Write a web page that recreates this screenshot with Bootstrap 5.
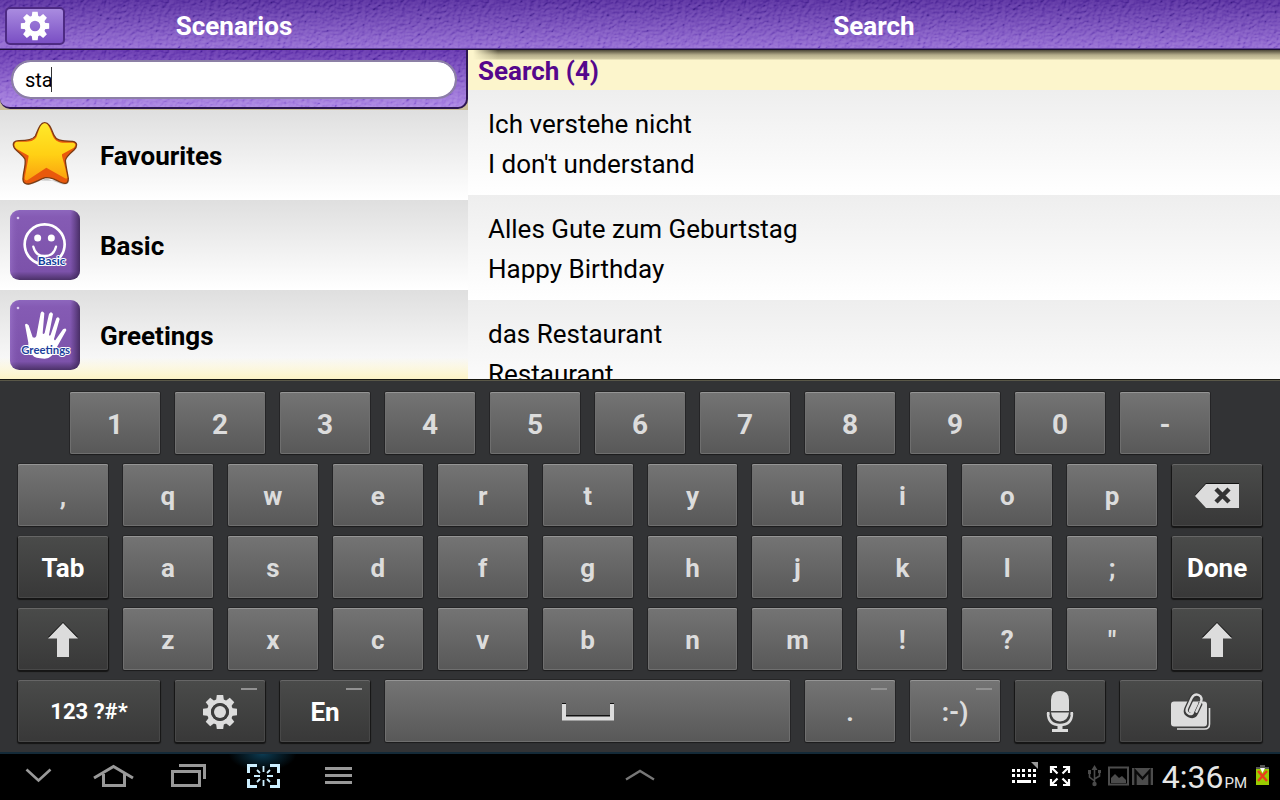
<!DOCTYPE html>
<html lang="en">
<head>
<meta charset="utf-8">
<meta name="viewport" content="width=device-width, initial-scale=1">
<title>Phrasebook search</title>
<link href="https://cdn.jsdelivr.net/npm/bootstrap@5.3.0/dist/css/bootstrap.min.css" rel="stylesheet">
<style>
  :root {
    --grain: url("data:image/svg+xml,%3Csvg xmlns='http://www.w3.org/2000/svg' width='320' height='120'%3E%3Cfilter id='g' x='0' y='0' width='100%25' height='100%25'%3E%3CfeTurbulence type='fractalNoise' baseFrequency='.25 .32' numOctaves='3' seed='4' stitchTiles='stitch'/%3E%3CfeDiffuseLighting surfaceScale='1.6' lighting-color='%23fff'%3E%3CfeDistantLight azimuth='235' elevation='45'/%3E%3C/feDiffuseLighting%3E%3CfeColorMatrix values='1 0 0 0 -.26 1 0 0 0 -.26 1 0 0 0 -.26 0 0 0 0 .5'/%3E%3C/filter%3E%3Crect width='320' height='120' filter='url(%23g)'/%3E%3C/svg%3E");
  }
  body { font-family: Roboto, "Noto Sans", sans-serif; color: #000; background: #fcf6cd; }
  button { font-family: inherit; }
  svg { display: block; flex: none; }
  .pane-left { flex: 117 1 0; min-width: 0; }
  .pane-right { flex: 203 1 0; min-width: 0; }
  .leather { background-image: var(--grain), linear-gradient(#532b9c, #9168d2); background-blend-mode: soft-light, normal; }

  .app-bar { height: 50px; flex: none; border-bottom: 1px solid #1c0e33; box-shadow: inset 0 -1px 0 #593b92; }
  .app-title { font-size: 26px; line-height: 30px; font-weight: 700; color: #fff; margin: 0; padding-top: 2px; }
  .scenario-head { display: grid; grid-template-columns: 1fr auto 1fr; align-items: center; }
  .settings-btn { width: 60px; height: 38px; padding: 0; display: flex; align-items: center; justify-content: center;
    border: 2px solid #4d2a83; border-radius: 5px; background: linear-gradient(#a98be0, #7a4fc4); margin: 3px 0 0 5px; }

  .content { min-height: 0; }
  .search-wrap { height: 60px; background: #cbbf99; }
  .search-panel { height: 59px; padding: 10px 9px 0 11px; border-right: 2px solid #2c1550; border-bottom: 2px solid #2c1550;
    border-radius: 0 0 10px 10px; background-image: var(--grain), linear-gradient(#5f31aa, #a780e2); }
  .search-input { height: 39px; border: 2px solid #8c80a5; border-radius: 20px; padding: 0 12px; font-size: 20px; line-height: 24px; color: #000; }
  .search-input:focus { box-shadow: none; border-color: #8c80a5; }
  .text-caret { position: absolute; left: 40px; top: 7px; width: 1px; height: 25px; background: #333; }
  .scenario { height: 90px; padding-left: 10px; gap: 20px; background: linear-gradient(#dfdfdf, #fff); font-size: 26px; font-weight: 700; color: #000; text-decoration: none; }
  .scenario span { padding-top: 2px; }
  .scenario.fading { background: linear-gradient(transparent 75%, #fcf3c4), linear-gradient(#dfdfdf, #fff); }

  .results-head { height: 40px; padding-left: 10px; font-size: 26px; line-height: 42px; font-weight: 700; color: #55078c; margin: 0;
    background: linear-gradient(#4c4737, #b4ad8a 5px, #d3cca4 9px, #fcf5cc 10px); position: relative; }
  .results-head::before { content: ""; position: absolute; inset: 0 auto auto 0; width: 30px; height: 10px; background: linear-gradient(90deg, #fcf5cc 5px, transparent); }
  .results-head span { position: relative; }
  .phrase { height: 105px; padding: 14px 20px; background: linear-gradient(#eeeeee, #fff); font-size: 26px; line-height: 40px; }

  .keyboard { padding: 12px 18px 10px; background: #323335; border-top: 1px solid #171712; box-shadow: inset 0 1px 0 #5a5848; display: flex; flex: none; flex-direction: column; gap: 10px; }
  .key-row { display: flex; gap: 15px; }
  .num-row { padding: 0 52px; }
  .kb-key { flex: 1 1 0; min-width: 0; height: 62px; padding: 2px 0 0; border: 0; border-radius: 2px; position: relative;
    display: flex; align-items: center; justify-content: center; font-size: 26px; line-height: 30px; font-weight: 700; color: #dcdcdc;
    background: linear-gradient(#747474, #585858);
    box-shadow: inset 0 1px 0 #959595, inset 0 0 0 1px #6f6f6f, 0 1px 1px 0 #1d1d1e, 0 0 0 1px #262627; }
  .num-row .kb-key { font-size: 28px; padding-top: 4px; }
  .kb-fn { color: #fff; background: linear-gradient(#4a4b4a, #383838); box-shadow: inset 0 1px 0 #666, inset 0 0 0 1px #484848, 0 1px 1px 1px #151515; }
  .key-sym { font-size: 22px; }
  .base-row .kb-key { flex-grow: 90; }
  .base-row .kb-wide { flex-grow: 142; }
  .base-row .kb-space { flex-grow: 405; }
  .has-more::after { content: ""; position: absolute; right: 8px; top: 8px; width: 16px; height: 2px; background: #929292; }

  .system-bar { height: 48px; flex: none; background: #000; border-top: 2px solid #142a38; display: grid; grid-template-columns: 1fr auto 1fr; }
  .sys-btn { border: 0; padding: 0; width: 75px; height: 46px; background: none; }
  .sys-btn.lit { background: radial-gradient(ellipse 34px 17px at 50% 0, #0c3b52, #000); }
  .sys-status { color: #e6e6e6; padding-right: 10px; }
  .clock { font-size: 32px; line-height: 46px; font-weight: 400; }
  .clock-half { font-size: 15px; line-height: 20px; padding-top: 11px; margin: 0 8px 0 1px; }
</style>
</head>
<body class="vh-100 overflow-hidden d-flex flex-column">

<svg width="0" height="0" class="position-absolute" aria-hidden="true">
  <defs>
    <g id="teeth">
      <path d="M-3.2 -17H3.2L4 -11H-4ZM-3.2 17H3.2L4 11H-4ZM-17 -3.2V3.2L-11 4V-4ZM17 -3.2V3.2L11 4V-4Z"/>
      <path transform="rotate(45)" d="M-3.2 -17H3.2L4 -11H-4ZM-3.2 17H3.2L4 11H-4ZM-17 -3.2V3.2L-11 4V-4ZM17 -3.2V3.2L11 4V-4Z"/>
    </g>
    <symbol id="shift" viewBox="0 0 32 36"><path fill="#151515" d="M16 0 31 15H22V20H10V15H1Z"/><path fill="#dcdcdc" d="M16 1 31 16.500H22V35H10V16.500H1Z"/></symbol>
    <linearGradient id="gold" x1="0" y1="0" x2="0" y2="1"><stop offset="0" stop-color="#ffe92a"/><stop offset=".55" stop-color="#ffd014"/><stop offset="1" stop-color="#fb9f0f"/></linearGradient>
    <linearGradient id="tileV" x1="0" y1="0" x2="0" y2="1"><stop offset="0" stop-color="#8d66bd"/><stop offset=".1" stop-color="#855bb4"/><stop offset=".88" stop-color="#7c52aa"/><stop offset="1" stop-color="#4b3168"/></linearGradient>
    <linearGradient id="tileH" x1="0" y1="0" x2="1" y2="0"><stop offset="0" stop-color="#b28ce0" stop-opacity=".35"/><stop offset=".14" stop-color="#7d54ad" stop-opacity="0"/><stop offset=".86" stop-color="#3c2458" stop-opacity="0"/><stop offset="1" stop-color="#35204c" stop-opacity=".75"/></linearGradient>
  </defs>
</svg>

<header class="app-bar leather d-flex">
  <div class="pane-left scenario-head">
    <button class="settings-btn" type="button" aria-label="Settings">
      <svg width="30" height="30" viewBox="-18 -18 36 36" fill="#fff"><use href="#teeth"/><circle r="9.500" fill="none" stroke="#fff" stroke-width="6.500"/></svg>
    </button>
    <h1 class="app-title">Scenarios</h1>
  </div>
  <div class="pane-right d-flex align-items-center justify-content-center"><h1 class="app-title">Search</h1></div>
</header>

<main class="content flex-grow-1 d-flex overflow-hidden">
  <section class="pane-left">
    <div class="search-wrap">
      <div class="search-panel leather">
        <div class="position-relative">
          <input class="form-control search-input" type="text" value="sta" aria-label="Search phrases">
          <span class="text-caret"></span>
        </div>
      </div>
    </div>
    <nav>
      <a href="#" class="scenario d-flex align-items-center">
        <svg width="70" height="70" viewBox="30 30 210 210">
          <path fill="#000" opacity=".2" d="M70 212Q78 230 98 222L138 205 184 222Q206 228 208 210Z"/>
          <path fill="#e9590c" stroke="#7b3c13" stroke-width="4" d="M134 38C148 38 153 56 162 76C168 90 178 93 218 94C234 97 232 110 222 120C208 132 197 142 196 152C198 172 203 192 205 206C204 224 192 222 180 216C162 206 145 202 136 203C120 207 104 219 86 222C66 223 68 207 70 195C72 180 78 160 75 148C70 136 50 125 42 112C36 98 44 92 57 92C82 92 98 90 106 78C114 62 119 38 134 38Z"/>
          <path fill="url(#gold)" d="M134 40C144 40 149 54 157 74C162 88 172 97 188 98L220 98C230 102 226 109 219 115L186 133C184 138 194 160 202 203Q201 207 195 205L139 173 82 211Q74 213 74 205C77 184 83 160 86 137L50 117C40 108 42 96 52 95C82 95 98 98 109 82C116 66 120 40 134 40Z"/>
        </svg>
        <span>Favourites</span>
      </a>
      <a href="#" class="scenario d-flex align-items-center">
        <svg width="70" height="70" viewBox="30 30 210 210">
          <rect x="30" y="30" width="210" height="210" rx="28" fill="url(#tileV)"/><rect x="30" y="30" width="210" height="210" rx="28" fill="url(#tileH)"/>
          <circle cx="54" cy="54" r="4" fill="#dccdf0"/>
          <circle cx="134" cy="133" r="60" fill="none" stroke="#fff" stroke-width="8"/>
          <circle cx="113" cy="114" r="10.500" fill="#fff"/><circle cx="154" cy="114" r="10.500" fill="#fff"/>
          <path fill="none" stroke="#fff" stroke-width="7" stroke-linecap="round" d="M100 140Q107 168 134 168Q161 168 168 140"/>
          <text x="155" y="196" text-anchor="middle" font-family="Lato, sans-serif" font-size="36" font-weight="700" fill="#123f9c" stroke="#fff" stroke-width="6" paint-order="stroke" stroke-linejoin="round">Basic</text>
        </svg>
        <span>Basic</span>
      </a>
      <a href="#" class="scenario fading d-flex align-items-center">
        <svg width="70" height="70" viewBox="30 30 210 210">
          <rect x="30" y="30" width="210" height="210" rx="28" fill="url(#tileV)"/><rect x="30" y="30" width="210" height="210" rx="28" fill="url(#tileH)"/>
          <circle cx="54" cy="54" r="4" fill="#dccdf0"/>
          <path fill="#fff" d="M75 104Q79 97 86 106L98 142Q106 146 109 138L122 69Q127 60 133 70L128 130Q130 135 134 129L147 72Q153 62 159 72L147 134Q149 140 152 134L169 85Q175 77 179 87L162 147Q163 153 167 149L189 118Q199 112 199 121L168 176Q158 204 134 206Q104 206 98 196Q82 184 85 158Z"/>
          <text x="137" y="192" text-anchor="middle" font-family="Lato, sans-serif" font-size="34" font-weight="700" fill="#1d3f9c" stroke="#fff" stroke-width="6" paint-order="stroke" stroke-linejoin="round">Greetings</text>
        </svg>
        <span>Greetings</span>
      </a>
    </nav>
  </section>
  <section class="pane-right">
    <h2 class="results-head"><span>Search (4)</span></h2>
    <div class="phrase"><div>Ich verstehe nicht</div><div>I don't understand</div></div>
    <div class="phrase"><div>Alles Gute zum Geburtstag</div><div>Happy Birthday</div></div>
    <div class="phrase"><div>das Restaurant</div><div>Restaurant</div></div>
  </section>
</main>

<section class="keyboard" aria-label="Keyboard">
  <div class="key-row num-row">
    <button class="kb-key" type="button">1</button><button class="kb-key" type="button">2</button><button class="kb-key" type="button">3</button><button class="kb-key" type="button">4</button><button class="kb-key" type="button">5</button><button class="kb-key" type="button">6</button><button class="kb-key" type="button">7</button><button class="kb-key" type="button">8</button><button class="kb-key" type="button">9</button><button class="kb-key" type="button">0</button><button class="kb-key" type="button">-</button>
  </div>
  <div class="key-row">
    <button class="kb-key" type="button">,</button><button class="kb-key" type="button">q</button><button class="kb-key" type="button">w</button><button class="kb-key" type="button">e</button><button class="kb-key" type="button">r</button><button class="kb-key" type="button">t</button><button class="kb-key" type="button">y</button><button class="kb-key" type="button">u</button><button class="kb-key" type="button">i</button><button class="kb-key" type="button">o</button><button class="kb-key" type="button">p</button>
    <button class="kb-key kb-fn" type="button" aria-label="Backspace">
      <svg width="44" height="26" viewBox="0 0 44 26"><path fill="#111" d="M0 12 11 0H44V20H11Z"/><path fill="#dcdcdc" d="M0 13 11 1H44V25H11Z"/><path stroke="#333" stroke-width="4.500" d="M21 6 34 19M34 6 21 19"/></svg>
    </button>
  </div>
  <div class="key-row">
    <button class="kb-key kb-fn" type="button">Tab</button><button class="kb-key" type="button">a</button><button class="kb-key" type="button">s</button><button class="kb-key" type="button">d</button><button class="kb-key" type="button">f</button><button class="kb-key" type="button">g</button><button class="kb-key" type="button">h</button><button class="kb-key" type="button">j</button><button class="kb-key" type="button">k</button><button class="kb-key" type="button">l</button><button class="kb-key" type="button">;</button><button class="kb-key kb-fn" type="button">Done</button>
  </div>
  <div class="key-row">
    <button class="kb-key kb-fn" type="button" aria-label="Shift"><svg width="32" height="36"><use href="#shift"/></svg></button><button class="kb-key" type="button">z</button><button class="kb-key" type="button">x</button><button class="kb-key" type="button">c</button><button class="kb-key" type="button">v</button><button class="kb-key" type="button">b</button><button class="kb-key" type="button">n</button><button class="kb-key" type="button">m</button><button class="kb-key" type="button">!</button><button class="kb-key" type="button">?</button><button class="kb-key" type="button">"</button><button class="kb-key kb-fn" type="button" aria-label="Shift"><svg width="32" height="36"><use href="#shift"/></svg></button>
  </div>
  <div class="key-row base-row">
    <button class="kb-key kb-fn kb-wide key-sym" type="button">123 ?#*</button>
    <button class="kb-key kb-fn has-more" type="button" aria-label="Keyboard settings">
      <svg width="36" height="36" viewBox="-18 -18 36 36" fill="#dcdcdc"><use href="#teeth"/><circle r="11" fill="none" stroke="#dcdcdc" stroke-width="4"/><circle r="9" fill="#3c3c3c"/><circle r="6"/></svg>
    </button>
    <button class="kb-key kb-fn has-more" type="button">En</button>
    <button class="kb-key kb-space" type="button" aria-label="Space">
      <svg width="52" height="18" viewBox="0 0 52 18"><path fill="none" stroke="#111" stroke-width="4" d="M2 0V14H50V0"/><path fill="none" stroke="#dcdcdc" stroke-width="4" d="M2 1V15.500H50V1"/></svg>
    </button>
    <button class="kb-key has-more" type="button">.</button>
    <button class="kb-key has-more" type="button">:-)</button>
    <button class="kb-key kb-fn" type="button" aria-label="Voice input">
      <svg width="28" height="42" viewBox="0 0 28 42" fill="#dcdcdc"><path d="M5 20V9Q5 0 14 0T23 9V20ZM5 21.500H23Q22 30 14 30.500Q6 30 5 21.500Z"/><path fill="none" stroke="#dcdcdc" stroke-width="2.500" d="M2 22Q2 34 14 34T26 22"/><path d="M1 21H3.500V24H1ZM24.500 21H27V24H24.500ZM11.500 34H16.500V38H22V41H6V38H11.500Z"/></svg>
    </button>
    <button class="kb-key kb-fn kb-wide" type="button" aria-label="Attach">
      <svg width="42" height="38" viewBox="0 0 42 38"><path fill="none" stroke="#dcdcdc" stroke-width="1.600" d="M39.500 15V31Q39.500 36 34.500 36H7"/><rect x="1" y="8.500" width="36" height="25" rx="3" fill="#dcdcdc"/><g transform="translate(24 12) rotate(25)" fill="none" stroke-linecap="round"><path stroke="#3a3a3a" stroke-width="5" d="M5 -3V6Q5 11 0 11T-5 6V-5Q-5 -10 0 -10"/><path stroke="#dcdcdc" stroke-width="2.400" d="M5 5V-5Q5 -11 0 -11T-5 -5V5Q-5 10 -1 10T2 6V-3"/></g></svg>
    </button>
  </div>
</section>

<footer class="system-bar">
  <div class="d-flex">
    <button class="sys-btn" type="button" aria-label="Hide keyboard"><svg width="75" height="46" fill="none" stroke="#999" stroke-width="2.600"><path d="M26.500 15.500 38.500 26.500 50.500 15.500"/></svg></button>
    <button class="sys-btn" type="button" aria-label="Home"><svg width="75" height="46" fill="none" stroke="#999" stroke-width="3"><path d="M19 24 38.500 12.500 58 24M28.500 20V31.500H49.500V20"/></svg></button>
    <button class="sys-btn" type="button" aria-label="Recent apps"><svg width="75" height="46" fill="none" stroke="#999" stroke-width="3"><path d="M22.500 17.500H49.500V31.500H22.500ZM29 11.500H54.500V25"/></svg></button>
    <button class="sys-btn lit" type="button" aria-label="Screenshot"><svg width="75" height="46" fill="none" stroke="#ccefff" stroke-width="3"><path d="M23.500 19V11.500H32M45 11.500H53.500V19M53.500 25V32.500H45M32 32.500H23.500V25"/><path stroke-width="1.800" d="M38.500 12V18M38.500 26V32M29 22H35M42 22H48M32 16 35 19M45 16 42 19M32 28 35 25M45 28 42 25"/></svg></button>
    <button class="sys-btn" type="button" aria-label="Menu"><svg width="75" height="46" fill="#999"><path d="M25 13H52V16H25ZM25 20H52V23H25ZM25 27H52V30H25Z"/></svg></button>
  </div>
  <button class="sys-btn" type="button" aria-label="Expand"><svg width="75" height="46" fill="none" stroke="#777" stroke-width="2.400"><path d="M23 25.500 37 17 51 25.500"/></svg></button>
  <div class="sys-status d-flex justify-content-end align-items-center">
    <svg class="me-2" width="142" height="46" viewBox="1012 754 142 46" role="img" aria-label="Notifications">
      <path fill="#fff" d="M1012 769h3v3h-3zM1017 769h3v3h-3zM1022 769h3v3h-3zM1028 769h3v3h-3zM1033 769h3v3h-3zM1012 774h3v3h-3zM1017 774h3v3h-3zM1022 774h3v3h-3zM1028 774h3v3h-3zM1033 774h3v3h-3zM1012 780h3v3h-3zM1017 780h14v3h-14zM1033 780h3v3h-3z"/>
      <path fill="#999" d="M1031 762h7v7z"/>
      <path fill="none" stroke="#fff" stroke-width="2.200" d="M1051 773V767H1057M1063 767H1069V773M1069 779V785H1063M1057 785H1051V779M1051 767 1057.500 773.500M1069 767 1062.500 773.500M1069 785 1062.500 778.500M1051 785 1057.500 778.500"/>
      <path fill="none" stroke="#4c4c4c" stroke-width="1.600" d="M1094.500 769V784M1089.500 773V777L1094.500 781M1099.500 772V776L1094.500 779"/>
      <path fill="#4c4c4c" d="M1094.500 765 1097.500 770H1091.500ZM1088 770H1091V774H1088ZM1098 770H1101V773H1098Z"/><circle cx="1094.500" cy="784" r="2.200" fill="#4c4c4c"/>
      <rect x="1109" y="767.500" width="19" height="17" fill="none" stroke="#4c4c4c" stroke-width="2"/><path fill="#4c4c4c" d="M1111 783V778L1115 774 1119 778 1122 776 1126 780V783Z"/>
      <path fill="#4c4c4c" d="M1132 768H1153V785H1132Z"/><path fill="none" stroke="#0a0a0a" stroke-width="2.400" d="M1135.500 785V771L1142.500 778.500 1149.500 771V785"/>
    </svg>
    <span class="clock">4:36</span><span class="clock-half">PM</span>
    <svg width="15" height="46" viewBox="0 0 15 46" role="img" aria-label="Battery error"><path fill="#555" d="M5 11H10V13H14V18H1V13H5Z"/><path fill="#9c0" d="M1 15H14V31H1Z"/><path fill="#fff" d="M5 14H10L7.500 19Z"/><path stroke="#e8401c" stroke-width="2.600" d="M3 17 12 27M12 17 3 27"/></svg>
  </div>
</footer>
<script src="https://cdn.jsdelivr.net/npm/bootstrap@5.3.0/dist/js/bootstrap.bundle.min.js"></script>
</body>
</html>
